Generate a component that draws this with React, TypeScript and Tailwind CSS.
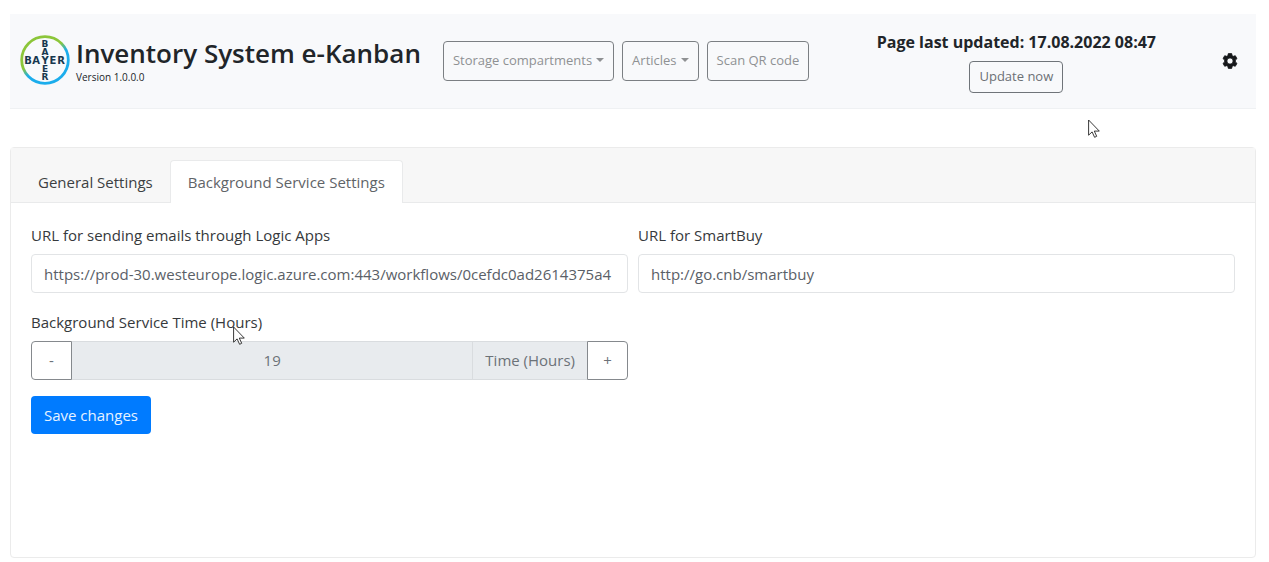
import { useState } from "react";
import type { ReactNode } from "react";

const WORD = ["B", "A", "Y", "E", "R"];
const ACROSS_X = [8, 16, 25, 33, 41];
const DOWN_Y = [12, 20, 28, 37, 45];

function BayerLogo() {
  return (
    <svg viewBox="0 0 50 50" className="mb-[2px] size-[50px] shrink-0" role="img" aria-label="Bayer">
      <defs>
        <linearGradient id="ring" x1="0.2" y1="0.1" x2="0.75" y2="0.9">
          <stop offset="0.4" stopColor="#8cc63a" />
          <stop offset="0.6" stopColor="#1badec" />
        </linearGradient>
      </defs>
      <circle cx="25" cy="25" r="23.3" fill="#f8fafc" stroke="url(#ring)" strokeWidth="2.8" />
      <g fill="#17384f" fontFamily="DejaVu Sans, sans-serif" fontWeight="700" textAnchor="middle">
        {WORD.map((c, i) => (
          <text key={"a" + i} x={ACROSS_X[i]} y="28.5" fontSize="10">
            {c}
          </text>
        ))}
        {WORD.map((c, i) =>
          i === 2 ? null : (
            <text key={"d" + i} x="25" y={DOWN_Y[i]} fontSize="9">
              {c}
            </text>
          ),
        )}
      </g>
    </svg>
  );
}

function Caret() {
  return <span className="ml-1 inline-block border-x-4 border-t-4 border-x-transparent border-t-current align-middle mb-1" />;
}

function NavButton({ children, menu }: { children: ReactNode; menu?: boolean }) {
  return (
    <button
      type="button"
      aria-haspopup={menu ? "menu" : undefined}
      className="h-10 rounded border border-[#7b7f83] px-[9px] text-[13px] whitespace-nowrap text-[#8f9193]"
    >
      {children}
      {menu && <Caret />}
    </button>
  );
}

function Gear() {
  return (
    <svg viewBox="0 0 16 16" className="size-4" fill="#17191b" aria-hidden="true">
      <path
        fillRule="evenodd"
        d="M6.3 0.6h3.4l.5 2.1 1 .6 2.1-.6 1.7 2.9-1.6 1.5v1.8l1.6 1.5-1.7 2.9-2.1-.6-1 .6-.5 2.1H6.3l-.5-2.1-1-.6-2.1.6L1 10.4l1.6-1.5V7.1L1 5.6l1.7-2.9 2.1.6 1-.6zM8 4.9a3.1 3.1 0 1 0 0 6.2 3.1 3.1 0 0 0 0-6.2z"
        stroke="#17191b"
        strokeWidth="0.8"
        strokeLinejoin="round"
      />
    </svg>
  );
}

function Pointer({ className }: { className: string }) {
  return (
    <svg viewBox="0 0 12 19" className={"pointer-events-none absolute h-[19px] w-3 " + className} aria-hidden="true">
      <path
        d="M.6 1v15.2l3.5-3.3 2.5 5.4 2.1-1-2.4-5.2h5z"
        fill="#fff"
        stroke="#222"
        strokeWidth="0.9"
        strokeLinejoin="round"
      />
    </svg>
  );
}

const fieldLabel = "block text-[15px] leading-6 text-[#36393c]";
const textField =
  "mt-[7px] block h-[39px] w-full rounded border border-[#e2e4e6] bg-white px-3 text-[15px] text-[#5a6067] outline-none";

export default function App() {
  const [hours, setHours] = useState(19);
  return (
    <div className="relative min-h-screen bg-white pt-[14px] pr-[13px] pb-1 pl-[10px] font-['Open_Sans','Noto_Sans',sans-serif] text-[15px] text-[#212529]">
      <header className="flex min-h-[95px] items-center border-b border-[#eff1f3] bg-[#f8f9fb] pr-[18px] pl-[10px]">
        <BayerLogo />
        <div className="ml-[6px]">
          <h1 className="text-[26px] leading-8 font-semibold whitespace-nowrap">Inventory System e-Kanban</h1>
          <p className="text-[10px] leading-4">Version 1.0.0.0</p>
        </div>
        <nav className="ml-[22px] flex gap-2">
          <NavButton menu>Storage compartments</NavButton>
          <NavButton menu>Articles</NavButton>
          <NavButton>Scan QR code</NavButton>
        </nav>
        <div className="mr-[66px] ml-auto flex flex-col items-center gap-[7px]">
          <p className="text-[16px] leading-6 font-bold whitespace-nowrap">Page last updated: 17.08.2022 08:47</p>
          <button type="button" className="h-8 rounded border border-[#6f7479] px-[9px] text-[13px] text-[#6c7075]">
            Update now
          </button>
        </div>
        <button type="button" aria-label="Settings">
          <Gear />
        </button>
      </header>

      <main className="mt-[38px] min-h-[411px] rounded border border-[#ebebeb]">
        <div role="tablist" className="flex border-b border-[#e9eaeb] bg-[#f7f7f7] pt-3 pl-[10px]">
          <button type="button" role="tab" aria-selected="false" className="h-[42px] px-[17px] pt-[2px] text-[#3c3f42]">
            General Settings
          </button>
          <button
            type="button"
            role="tab"
            aria-selected="true"
            className="-mb-px h-[43px] rounded-t border border-b-0 border-[#e9eaeb] bg-white px-[17px] text-[#5f6468]"
          >
            Background Service Settings
          </button>
        </div>
        <form className="px-5 pt-5 pb-5" onSubmit={(e) => e.preventDefault()}>
          <div className="grid grid-cols-2 gap-x-[10px] gap-y-[17px]">
            <div>
              <label htmlFor="logic" className={fieldLabel}>
                URL for sending emails through Logic Apps
              </label>
              <input
                id="logic"
                className={textField}
                defaultValue="https://prod-30.westeurope.logic.azure.com:443/workflows/0cefdc0ad2614375a4"
              />
            </div>
            <div>
              <label htmlFor="smartbuy" className={fieldLabel}>
                URL for SmartBuy
              </label>
              <input id="smartbuy" className={textField} defaultValue="http://go.cnb/smartbuy" />
            </div>
            <div>
              <label htmlFor="hours" className={fieldLabel}>
                Background Service Time (Hours)
              </label>
              <div className="mt-[7px] flex h-[39px] text-[#6c7278]">
                <button
                  type="button"
                  aria-label="Decrease"
                  onClick={() => setHours(hours - 1)}
                  className="w-[41px] rounded-l border border-[#85898d] bg-white"
                >
                  -
                </button>
                <input
                  id="hours"
                  readOnly
                  value={hours}
                  className="min-w-0 flex-1 border-y border-[#d9dcdf] bg-[#e8ebee] text-center outline-none"
                />
                <span className="flex items-center border border-r-0 border-[#d9dcdf] bg-[#e8ebee] px-3 whitespace-nowrap">
                  Time (Hours)
                </span>
                <button
                  type="button"
                  aria-label="Increase"
                  onClick={() => setHours(hours + 1)}
                  className="w-[41px] rounded-r border border-[#85898d] bg-white"
                >
                  +
                </button>
              </div>
            </div>
          </div>
          <button type="submit" className="mt-4 h-[38px] rounded bg-[#007bff] px-[13px] text-[#e6f2ff]">
            Save changes
          </button>
        </form>
      </main>

      <Pointer className="top-[119px] left-[1088px]" />
      <Pointer className="top-[326px] left-[233px]" />
    </div>
  );
}
